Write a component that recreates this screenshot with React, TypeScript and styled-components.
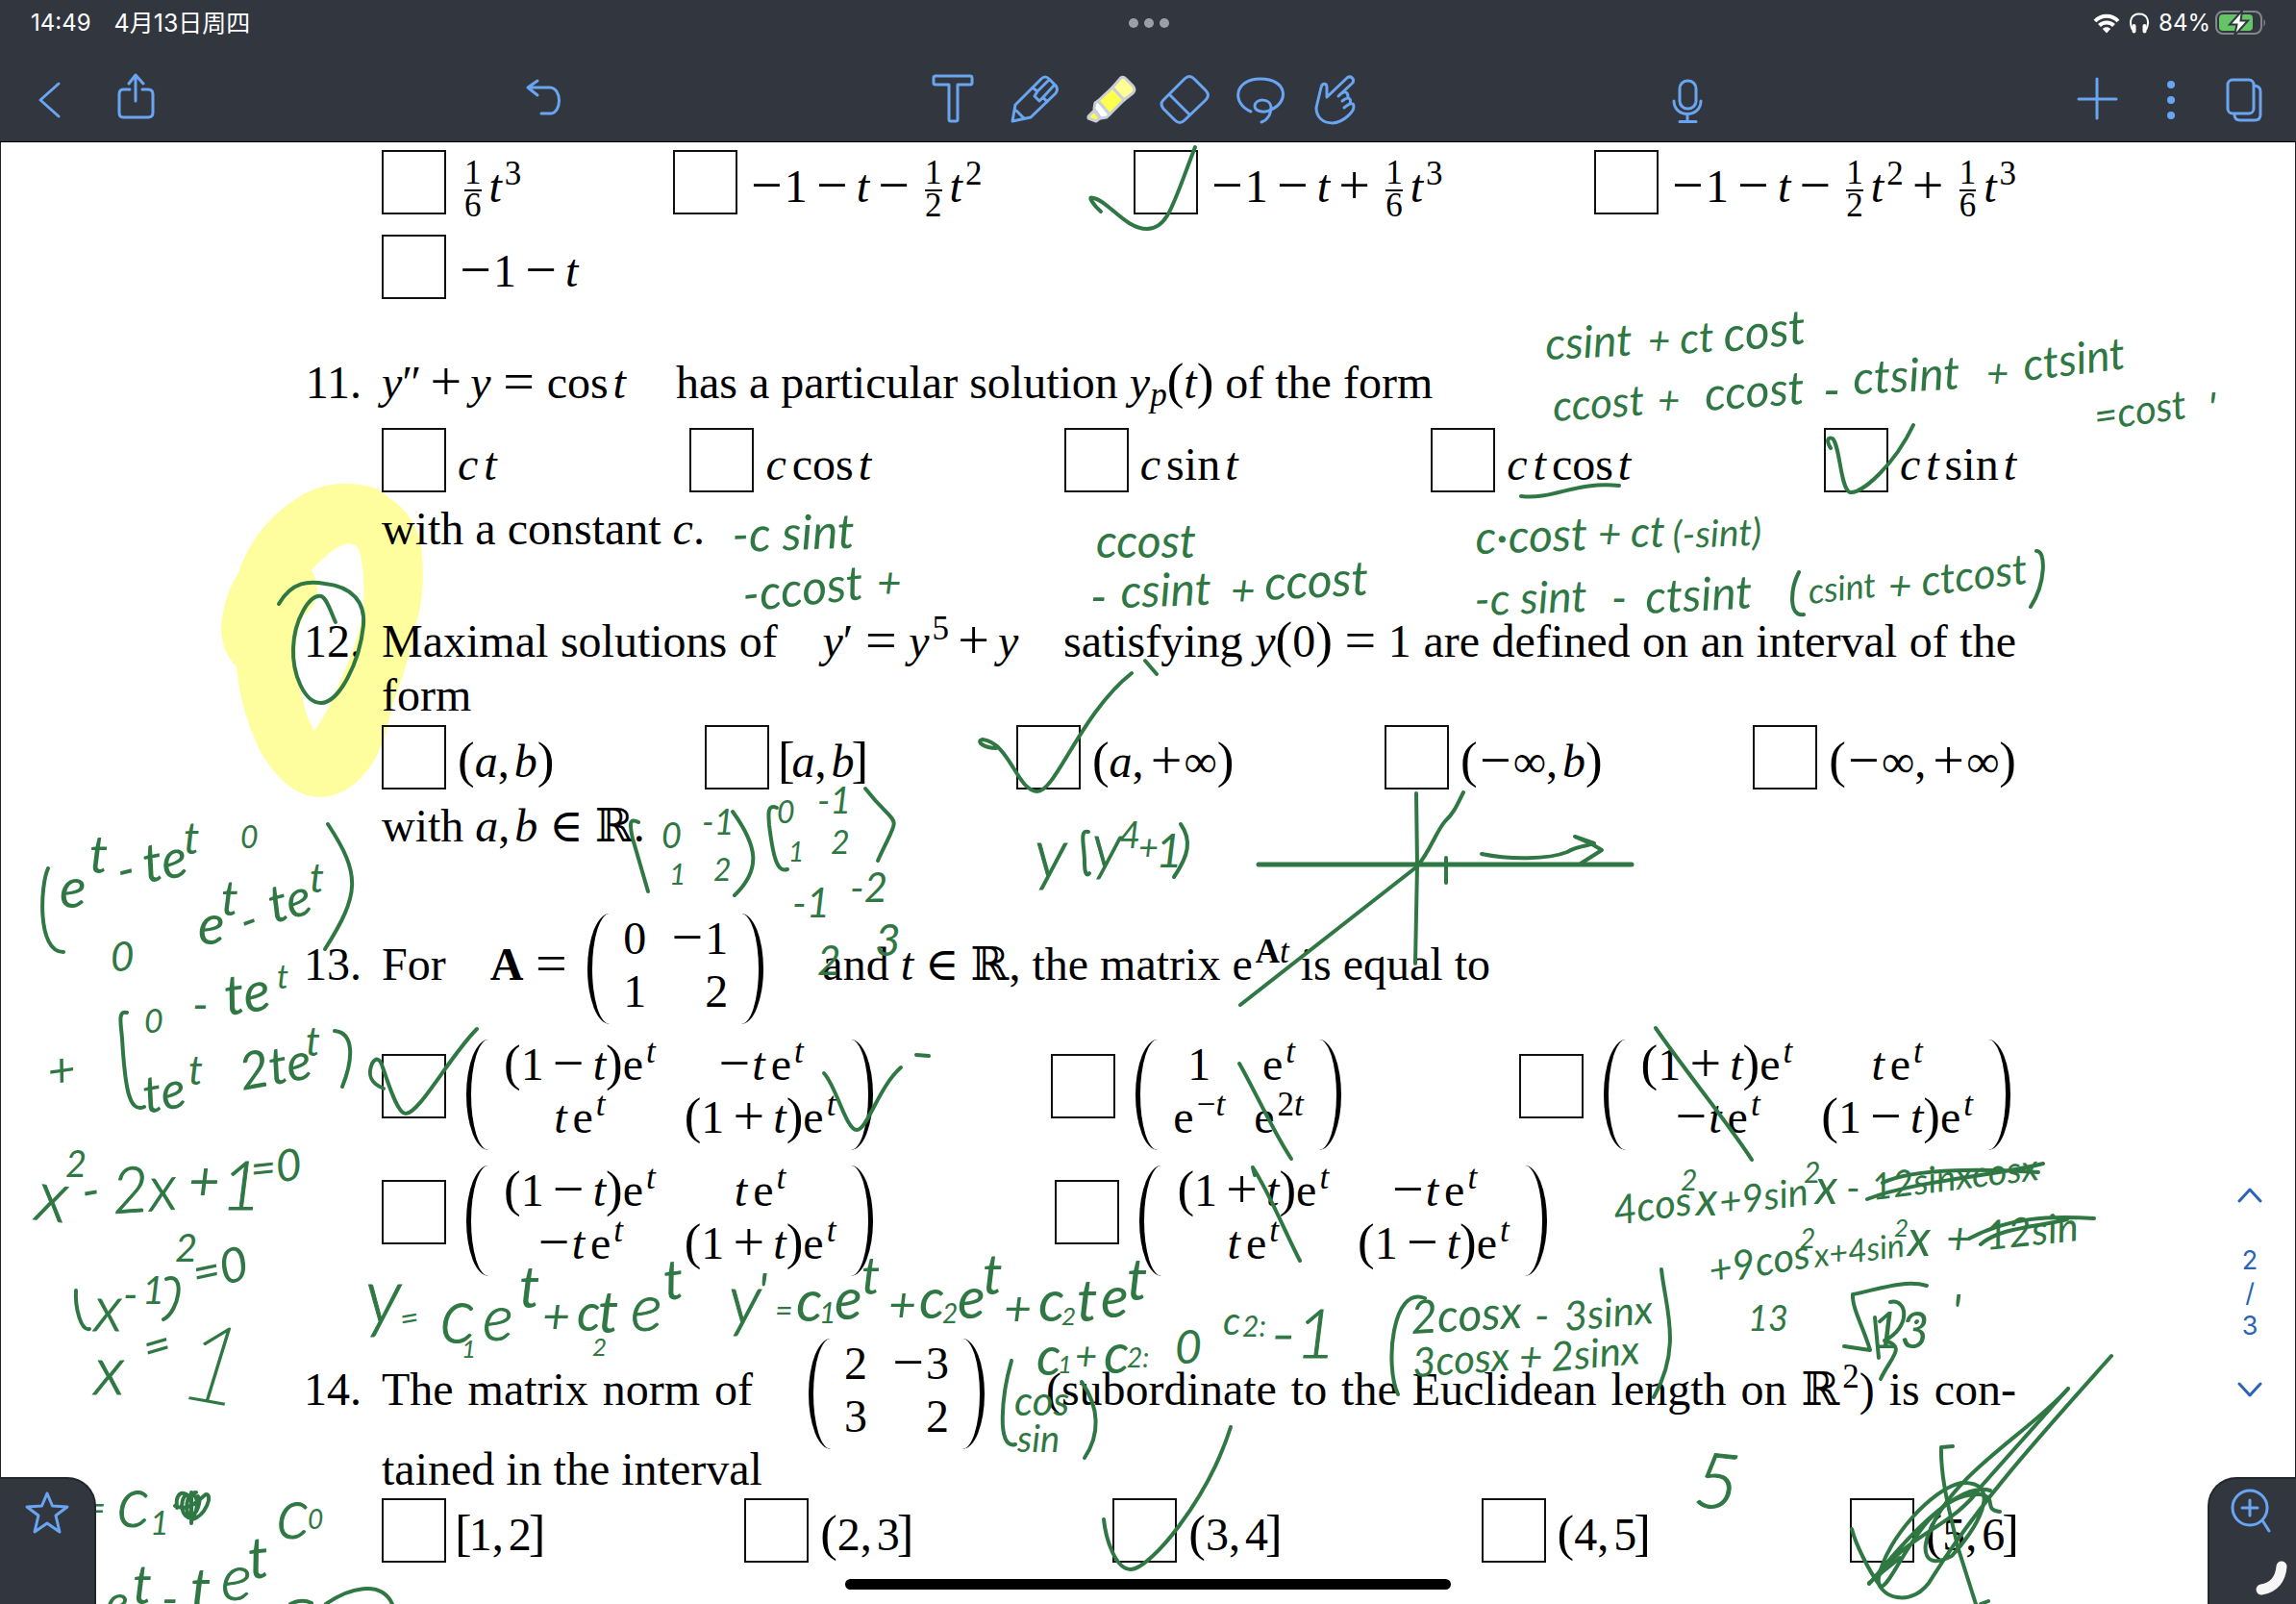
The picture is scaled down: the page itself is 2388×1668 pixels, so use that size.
import React from "react";
import styled, { createGlobalStyle, css } from "styled-components";

const BLUE = "#6aa5f2";
const BAR = "#32363f";
const INK = "#2f7843";

const Global = createGlobalStyle`
  html, body, #root { height: 100%; }
  body { margin: 0; background: #fff; overflow: hidden; }
  * { box-sizing: border-box; }
`;

/* ---------- shell ---------- */

const Shell = styled.div`
  position: relative;
  display: flex;
  flex-direction: column;
  height: 100vh;
  overflow: hidden;
  font-family: Inter, "Noto Sans CJK SC", sans-serif;
`;

const Header = styled.header`
  flex: none;
  background: ${BAR};
  border-bottom: 1px solid #000;
`;

const StatusBar = styled.div`
  display: grid;
  grid-template-columns: 1fr auto 1fr;
  align-items: center;
  height: 48px;
  padding: 0 30px 0 32px;
  color: #fff;
  font-size: 24px;
  line-height: 32px;
`;

const StatusGroup = styled.div<{ $end?: boolean }>`
  display: flex;
  align-items: center;
  gap: ${(p) => (p.$end ? 10 : 24)}px;
  justify-content: ${(p) => (p.$end ? "flex-end" : "flex-start")};
`;

const Day = styled.span`
  font-size: 25px;
`;

const Charge = styled.span`
  display: flex;
  align-items: center;
  gap: 5px;
`;

const Dots = styled.button`
  display: flex;
  gap: 6px;
  padding: 0;
  border: 0;
  background: none;
`;

const Dot = styled.span`
  width: 10px;
  height: 10px;
  border-radius: 50%;
  background: #9d9fa8;
`;

const Toolbar = styled.nav`
  display: grid;
  grid-template-columns: 1fr auto 1fr;
  height: 99px;
  padding: 28px 14px 0 12px;
`;

const ToolGroup = styled.div<{ $split: "start" | "end" }>`
  display: flex;
  justify-content: space-between;
  padding-right: ${(p) => (p.$split === "start" ? 341 : 0)}px;
  padding-left: ${(p) => (p.$split === "end" ? 275 : 0)}px;
`;

const Cluster = styled.div<{ $main?: boolean }>`
  display: flex;
  padding-right: ${(p) => (p.$main ? 14 : 0)}px;
`;

const ToolButton = styled.button<{ $wide?: boolean }>`
  display: flex;
  justify-content: center;
  width: ${(p) => (p.$wide ? 92 : 78)}px;
  height: 56px;
  padding: 0;
  border: 0;
  background: none;
`;

const Glyph = styled.svg`
  display: block;
  flex: none;
  fill: none;
  stroke: ${BLUE};
  stroke-width: 3;
  stroke-linecap: round;
  stroke-linejoin: round;
`;

type ToolProps = { label: string; cx: number; wide?: boolean; children: React.ReactNode };

const Tool = ({ label, cx, wide, children }: ToolProps) => (
  <ToolButton type="button" aria-label={label} $wide={wide}>
    <Glyph width="56" height="56" viewBox={`${cx - 28} 76 56 56`} aria-hidden="true">
      {children}
    </Glyph>
  </ToolButton>
);

/* ---------- document ---------- */

const Canvas = styled.main`
  position: relative;
  flex: 1;
  min-height: 0;
  overflow: hidden;
  border: solid #1f2229;
  border-width: 0 1px;
  background: #fff;
`;

const Sheet = styled.article`
  position: relative;
  padding: 8px 290px 0 315px;
  color: #000;
  font-family: "Liberation Serif", "DejaVu Serif", serif;
  font-size: 48px;
  line-height: 56px;
`;

const Question = styled.section<{ $top?: number }>`
  display: grid;
  grid-template-columns: 60px minmax(0, 1fr);
  column-gap: 21px;
  margin-top: ${(p) => p.$top ?? 0}px;
`;

const Num = styled.span<{ $tall?: boolean }>`
  padding-top: ${(p) => (p.$tall ? 18 : 0)}px;
  text-align: right;
`;

const Body = styled.div`
  grid-column: 2;
`;

const Para = styled.p<{ $top?: number }>`
  margin: ${(p) => p.$top ?? 0}px 0 0;
  text-align: justify;
`;

const Options = styled.div<{ $top?: number; $packed?: boolean }>`
  display: flex;
  justify-content: ${(p) => (p.$packed ? "flex-start" : "space-between")};
  gap: ${(p) => (p.$packed ? 183 : 0)}px;
  margin-top: ${(p) => p.$top ?? 0}px;
`;

const Choice = styled.label<{ $matrix?: boolean }>`
  display: flex;
  align-items: flex-start;
  gap: 12px;
  height: ${(p) => (p.$matrix ? 115 : 67)}px;
  white-space: nowrap;
`;

const Box = styled.input<{ $low?: boolean }>`
  appearance: none;
  flex: none;
  width: 67px;
  height: 67px;
  margin: ${(p) => (p.$low ? 15 : 0)}px 0 0;
  border: 2px solid #111;
  border-radius: 0;
`;

const Formula = styled.span`
  padding-top: 10px;
`;

const M = styled.span`
  white-space: nowrap;
`;

const I = styled.i<{ $gap?: boolean }>`
  margin-right: ${(p) => (p.$gap ? 6 : 0)}px;
`;

const Fn = styled.span`
  margin-right: 5px;
`;

const Sym = styled.span<{ $w: number }>`
  display: inline-block;
  width: ${(p) => p.$w}px;
  font-size: 58px;
  line-height: 0;
  text-align: center;
  vertical-align: -2px;
`;

const Par = styled.span<{ $square?: boolean }>`
  margin: 0 ${(p) => (p.$square ? -3 : 0)}px;
  font-size: 53px;
  line-height: 0;
`;

const Sup = styled.sup`
  margin-left: 3px;
  font-size: 35px;
  line-height: 0;
  vertical-align: 18px;
`;

const Sub = styled.sub`
  font-size: 35px;
  line-height: 0;
  vertical-align: -8px;
`;

const Quad = styled.span<{ $wide?: boolean }>`
  display: inline-block;
  width: ${(p) => (p.$wide ? 40 : 34)}px;
`;

const FracBox = styled.span`
  display: inline-flex;
  flex-direction: column;
  align-items: center;
  margin: -8px 8px -16px 7px;
  font-size: 35px;
  line-height: 30px;
  vertical-align: 19px;
`;

const FracTop = styled.span`
  padding-bottom: 2px;
  border-bottom: 2px solid #000;
`;

const MatrixBox = styled.span<{ $inline?: boolean }>`
  display: inline-flex;
  height: 115px;
  margin: ${(p) => (p.$inline ? "-7px 9px" : "0 6px 0 9px")};
  vertical-align: middle;
`;

const Delim = styled.span<{ $right?: boolean }>`
  width: 23px;
  height: 115px;
  border: 0 solid #000;
  ${(p) =>
    p.$right
      ? css`
          border-right-width: 5px;
          border-radius: 0 100% 100% 0 / 0 50% 50% 0;
        `
      : css`
          border-left-width: 5px;
          border-radius: 100% 0 0 100% / 50% 0 0 50%;
        `}
`;

const Cells = styled.span<{ $right?: boolean }>`
  display: grid;
  grid-template-columns: auto auto;
  gap: 3px ${(p) => (p.$right ? 24 : 30)}px;
  justify-items: ${(p) => (p.$right ? "end" : "center")};
  padding: 0 ${(p) => (p.$right ? 14 : 16)}px 8px;
  line-height: 52px;
`;

const Bin = ({ s }: { s: string }) => <Sym $w={51}>{s}</Sym>;
const Un = ({ s }: { s: string }) => <Sym $w={37}>{s}</Sym>;
const Eq = () => <Sym $w={58}>=</Sym>;

const Frac = ({ d }: { d: number }) => (
  <FracBox>
    <FracTop>1</FracTop>
    <span>{d}</span>
  </FracBox>
);

const Matrix = ({ cells, inline }: { cells: React.ReactNode[]; inline?: boolean }) => (
  <MatrixBox $inline={inline}>
    <Delim />
    <Cells $right={inline}>
      {cells.map((c, i) => (
        <span key={i}>{c}</span>
      ))}
    </Cells>
    <Delim $right />
  </MatrixBox>
);

const Opt = ({ children }: { children: React.ReactNode }) => (
  <Choice>
    <Box type="checkbox" />
    <Formula>{children}</Formula>
  </Choice>
);

const MatrixOpt = ({ cells }: { cells: React.ReactNode[] }) => (
  <Choice $matrix>
    <Box type="checkbox" $low />
    <Matrix cells={cells} />
  </Choice>
);

const Et = () => (
  <>
    e<Sup><i>t</i></Sup>
  </>
);

const Lin = ({ s }: { s: string }) => (
  <M>
    <Par>(</Par>1<Bin s={s} /><i>t</i><Par>)</Par><Et />
  </M>
);

const TEt = ({ neg }: { neg?: boolean }) => (
  <M>
    {neg && <Un s="−" />}
    <I $gap>t</I>
    <Et />
  </M>
);

const OneT = () => (
  <>
    <Un s="−" />1<Bin s="−" /><i>t</i>
  </>
);

const Interval = ({ open, a, b, close }: { open: string; a: React.ReactNode; b: React.ReactNode; close: string }) => (
  <M>
    <Par $square={open === "["}>{open}</Par>{a}<Fn>,</Fn>{b}<Par $square={close === "]"}>{close}</Par>
  </M>
);

/* ---------- pen layer ---------- */

const Layer = styled.svg`
  position: absolute;
  top: -148px;
  left: -1px;
  overflow: visible;
  pointer-events: none;
`;

const Stroke = styled.path<{ $w?: number }>`
  fill: none;
  stroke: ${INK};
  stroke-width: ${(p) => p.$w ?? 4};
  stroke-linecap: round;
  stroke-linejoin: round;
`;

const Written = styled.text<{ $size: number }>`
  fill: ${INK};
  stroke: ${INK};
  stroke-width: ${(p) => (p.$size > 80 ? 2 : p.$size > 60 ? 1 : 0)};
  font-family: Lato, "Open Sans", sans-serif;
  font-style: italic;
  font-weight: ${(p) => (p.$size > 80 ? 100 : p.$size > 60 ? 300 : 400)};
  font-size: ${(p) => p.$size}px;
`;

// text, x, baseline, size, tilt in degrees
type Jot = [string, number, number, number, number?];

const jots: Jot[] = [
  ["csint", 1608, 374, 46, -3], ["+", 1714, 368, 40], ["ct", 1748, 368, 44, -4], ["cost", 1794, 366, 50, -6],
  ["ccost", 1616, 438, 44, -4], ["+", 1724, 430, 40], ["ccost", 1774, 427, 48, -4], ["-", 1896, 424, 52], ["ctsint", 1928, 410, 48, -3],
  ["+", 2066, 402, 40], ["ctsint", 2106, 396, 46, -7], ["=cost", 2180, 448, 42, -8], ["'", 2296, 440, 44],
  ["-c sint", 762, 574, 50, -2], ["-ccost", 774, 636, 50, -6], ["+", 912, 622, 44],
  ["ccost", 1140, 580, 48], ["-", 1134, 638, 50], ["csint", 1166, 632, 48, -2], ["+", 1280, 630, 44], ["ccost", 1316, 624, 50, -3],
  ["c·cost", 1535, 576, 48, -2], ["+", 1662, 570, 42], ["ct", 1696, 569, 44], ["(-sint)", 1740, 570, 39, -2],
  ["-c sint", 1534, 640, 46, -2], ["-", 1676, 638, 46], ["ctsint", 1712, 638, 48, -3], ["csint", 1882, 628, 36, -6], ["+", 1964, 624, 42], ["ctcost", 2000, 620, 44, -7],
  ["y", 1076, 912, 72], ["y", 1136, 903, 66], ["4", 1164, 882, 38], ["+", 1184, 894, 36], ["1", 1202, 902, 48],
  ["0", 688, 882, 36], ["-1", 730, 868, 36], ["1", 696, 920, 30], ["2", 742, 916, 32],
  ["0", 808, 856, 32], ["-1", 850, 846, 38], ["1", 820, 896, 28], ["2", 864, 888, 34],
  ["-1", 824, 954, 42], ["-2", 884, 938, 42], ["3", 910, 994, 46], ["2", 850, 1014, 42],
  ["e", 62, 944, 58], ["t", 93, 908, 54], ["-", 126, 924, 52, -14], ["te", 152, 918, 56, -10], ["t", 191, 888, 46], ["0", 250, 882, 32],
  ["0", 115, 1010, 42], ["e", 206, 982, 58], ["t", 230, 952, 50], ["-", 256, 976, 50, -20], ["te", 284, 960, 54, -14], ["t", 322, 928, 42],
  ["0", 150, 1074, 34], ["-", 200, 1062, 48], ["te", 236, 1056, 58, -8], ["t", 288, 1028, 34],
  ["+", 52, 1132, 50, -8], ["te", 152, 1158, 54, -10], ["t", 196, 1128, 42], ["2te", 252, 1134, 54, -10], ["t", 318, 1098, 42],
  ["x", 36, 1268, 74, 6], ["2", 68, 1224, 38], ["-", 88, 1258, 54, -10], ["2x", 118, 1262, 66, -4], ["+", 196, 1248, 56], ["1", 230, 1258, 72], ["=0", 262, 1232, 46, -6],
  ["x", 98, 1384, 66], ["-", 128, 1362, 44], ["1", 148, 1356, 40], ["2", 182, 1312, 40], ["=0", 204, 1342, 50, -12],
  ["x", 98, 1450, 72], ["=", 154, 1420, 50, -16], ["1", 184, 1452, 112, 10],
  ["y", 380, 1376, 80], ["=", 418, 1384, 34, -10], ["c", 458, 1396, 80], ["1", 480, 1412, 26], ["e", 502, 1394, 68], ["t", 540, 1360, 60],
  ["+", 564, 1386, 50], ["c", 600, 1384, 54], ["t", 622, 1386, 60], ["2", 616, 1410, 26], ["e", 656, 1384, 70], ["t", 692, 1352, 58, -6],
  ["y", 758, 1376, 72], ["'", 788, 1362, 52], ["=", 806, 1374, 32], ["c", 828, 1374, 60], ["1", 852, 1376, 30], ["e", 868, 1372, 60], ["t", 896, 1346, 54],
  ["+", 924, 1374, 50], ["c", 956, 1371, 58], ["2", 980, 1376, 28], ["e", 996, 1371, 60], ["t", 1022, 1346, 58],
  ["+", 1044, 1378, 50], ["c", 1080, 1374, 60], ["2", 1104, 1378, 26], ["t", 1120, 1374, 60], ["e", 1145, 1370, 60], ["t", 1172, 1352, 60],
  ["c", 1078, 1430, 56], ["1", 1100, 1428, 26], ["+", 1118, 1424, 40], ["c", 1148, 1428, 58], ["2:", 1172, 1422, 28], ["0", 1222, 1418, 48],
  ["c", 1272, 1388, 40], ["2:", 1292, 1390, 30], ["-1", 1322, 1412, 72],
  ["cos", 1055, 1472, 42], ["sin", 1058, 1510, 38],
  ["2cosx", 1468, 1387, 48, -3], ["-", 1596, 1384, 44], ["3sinx", 1628, 1384, 42, -5],
  ["3cosx", 1470, 1432, 42, -4], ["+", 1580, 1426, 42], ["2sinx", 1614, 1426, 42, -5],
  ["4cos", 1680, 1274, 42, -8], ["2", 1748, 1238, 30], ["x", 1764, 1264, 48], ["+9sin", 1790, 1264, 40, -7], ["2", 1876, 1230, 30], ["x", 1888, 1252, 50], ["-", 1920, 1250, 42],
  ["12sinxcosx", 1948, 1248, 38, -7],
  ["+9cos", 1780, 1336, 42, -10], ["2", 1872, 1298, 28], ["x+4sin", 1888, 1318, 34, -7], ["2", 1970, 1286, 26], ["x", 1984, 1306, 52], ["+", 2024, 1304, 46], ["12sin", 2066, 1300, 42, -6],
  ["13", 1818, 1384, 36], ["13", 1946, 1402, 52], ["'", 2030, 1382, 50],
  ["5", 1760, 1566, 80, 6],
  ["=", 88, 1582, 38], ["c", 122, 1588, 74], ["1", 156, 1596, 34], ["c", 288, 1600, 74], ["0", 320, 1590, 28],
  ["e", 110, 1684, 50], ["t", 138, 1668, 56], ["-", 168, 1680, 50], ["t", 198, 1674, 60], ["e", 230, 1664, 68], ["t", 260, 1642, 60, -6],
];

const strokes: string[] = [
  // ticks over the chosen boxes
  "M1145 220C1138 214 1130 203 1137 206C1152 208 1170 238 1193 238C1215 238 1220 212 1243 153",
  "M1904 466C1899 458 1901 454 1906 456C1914 464 1914 508 1924 512C1936 514 1970 484 1990 442",
  "M1582 516C1615 520 1640 500 1684 505",
  "M1036 778C1024 778 1014 771 1022 769C1050 772 1058 823 1079 823C1098 823 1124 742 1177 700M1191 687L1203 701",
  "M399 1132C385 1126 382 1118 387 1106C391 1098 396 1102 398 1110C404 1126 413 1158 422 1158C436 1158 468 1098 496 1070",
  "M857 1116C870 1130 880 1175 891 1175C902 1175 914 1130 937 1110M953 1097L966 1098",
  "M1148 1580C1150 1600 1160 1632 1176 1632C1196 1632 1256 1560 1280 1484",
  // loop round the question number
  "M290 628C304 604 322 604 338 607C366 610 380 626 378 650C374 690 352 731 334 731C316 731 304 700 305 674C306 644 322 618 334 620C340 622 344 636 349 647",
  // struck answers
  "M1289 1106C1304 1132 1326 1180 1343 1205",
  "M1305 1222L1303 1214C1320 1240 1336 1280 1352 1311",
  "M1722 1069C1750 1110 1796 1166 1822 1206",
  // axes, slope and arrow
  "M1473 825L1474 900L1472 1002M1290 1045L1474 901C1488 884 1494 864 1503 854C1512 846 1516 836 1522 824M1504 892L1504 918",
  "M1541 888C1570 894 1610 894 1630 886C1640 880 1650 880 1658 877L1638 870L1656 878L1666 884L1644 898",
  // brackets of the margin working
  "M50 903C42 920 38 990 66 990M341 857C376 910 374 930 338 987",
  "M132 1053C122 1050 126 1066 127 1080C130 1130 134 1158 150 1151M348 1072C368 1074 368 1100 356 1130",
  "M79 1342C78 1360 84 1384 93 1382M173 1330C194 1322 186 1364 170 1372",
  "M664 855C654 850 655 858 658 872L674 927M762 844C788 880 792 904 764 931",
  "M808 840C798 836 799 846 800 858C804 890 808 908 819 904M900 820C936 866 938 840 913 895",
  "M1132 865C1122 862 1128 880 1128 896C1128 908 1130 912 1133 908M1228 857C1240 874 1236 890 1221 912",
  "M1871 595C1862 612 1860 642 1876 639M2118 573C2128 572 2128 606 2112 631",
  "M1052 1415C1042 1450 1036 1508 1056 1502M1125 1437C1144 1464 1144 1492 1128 1516",
  "M1482 1350C1448 1336 1440 1420 1454 1450M1728 1320C1732 1360 1750 1400 1720 1453",
  // root sign and its scribble
  "M1918 1400L1945 1404C1938 1380 1926 1360 1927 1346C1950 1342 1980 1330 2004 1337M1954 1412L1950 1370M1966 1354C1984 1350 1988 1380 1960 1394C1984 1400 1966 1412 1956 1434M1994 1374L1993 1375",
  // crossed-out terms
  "M1942 1247C1990 1228 2080 1222 2125 1210M1958 1230C1990 1214 2070 1216 2120 1219",
  "M2048 1288C2090 1266 2130 1264 2178 1267M2060 1294C2080 1276 2120 1276 2150 1268",
  // last answer scribbled over
  "M2196 1410C2130 1484 2060 1560 2010 1640C1990 1676 1950 1660 1954 1640C1962 1600 2010 1548 2040 1542C2080 1540 2064 1580 2030 1618C2000 1634 1998 1610 2008 1590C2034 1530 2110 1490 2151 1444",
  "M2151 1444L2062 1544C2030 1590 1990 1590 1944 1647M2070 1550C2040 1540 1990 1590 1946 1645M1926 1590C1930 1606 1944 1634 1956 1650C1970 1650 2000 1550 2060 1554C2078 1558 2062 1570 2080 1572M1976 1620L1944 1646",
  "M2031 1504L2019 1505C2018 1540 2030 1580 2036 1608L2055 1668M2060 1668L2068 1665",
  // doodles at the lower left
  "M184 1568C182 1552 190 1550 196 1556C206 1548 208 1570 200 1578C188 1580 186 1560 194 1554M182 1566C196 1572 204 1562 214 1554C222 1554 214 1576 200 1580C190 1572 194 1552 204 1552M199 1552L199 1584M206 1556C210 1562 204 1574 200 1576",
  "M302 1668C310 1664 318 1664 324 1667M339 1668C362 1652 396 1642 408 1668",
];

const Highlight = () => (
  <Layer width="2388" height="1668" viewBox="0 0 2388 1668" aria-hidden="true">
    <path
      fill="#fffe9f"
      fillRule="evenodd"
      d="M362 503C384 504 396 508 405 518C424 530 434 548 438 566C442 604 440 626 430 659C424 690 416 712 409 731C402 760 400 768 394 781C380 812 356 829 332 829C306 828 286 808 270 780C256 750 248 720 246 693C236 684 230 670 230 652C232 630 238 610 248 596C258 566 274 544 300 524C322 508 340 502 362 503ZM363 565C352 566 340 576 324 593C334 610 332 628 316 640C306 660 304 690 315 727C318 744 322 752 327 760C334 750 340 740 348 722C358 698 376 660 378 630C380 600 376 572 370 567Z"
    />
  </Layer>
);

const Ink = () => (
  <Layer width="2388" height="1668" viewBox="0 0 2388 1668">
    {strokes.map((d) => (
      <Stroke key={d} d={d} />
    ))}
    <Stroke d="M1309 899L1697 899" $w={5} />
    {jots.map(([t, x, y, size, tilt], i) => (
      <Written key={i} x={x} y={y} $size={size} transform={tilt ? `rotate(${tilt} ${x} ${y})` : undefined}>
        {t}
      </Written>
    ))}
  </Layer>
);

/* ---------- floating controls ---------- */

const Corner = styled.div<{ $side: "left" | "right" }>`
  position: absolute;
  bottom: 0;
  ${(p) => p.$side}: 0;
  width: ${(p) => (p.$side === "left" ? 100 : 92)}px;
  height: 132px;
  padding-top: 7px;
  border: 2px solid #22262d;
  border-width: 2px ${(p) => (p.$side === "left" ? "2px 0 0" : "0 0 2px")};
  border-radius: ${(p) => (p.$side === "left" ? "0 30px 0 0" : "30px 0 0 0")};
  background: ${BAR};
`;

const CornerButton = styled.button`
  display: flex;
  justify-content: center;
  width: 100%;
  padding: 0;
  border: 0;
  background: none;
`;

const Swoosh = styled.svg`
  position: absolute;
  right: 0;
  bottom: 0;
`;

const Pager = styled.nav`
  position: absolute;
  right: 28px;
  bottom: 209px;
  display: flex;
  flex-direction: column;
  align-items: center;
  width: 40px;
  color: #2b63b8;
  font-size: 27px;
  line-height: 34px;
`;

const PagerButton = styled.button`
  display: flex;
  align-items: center;
  justify-content: center;
  width: 40px;
  height: 28px;
  padding: 0;
  border: 0;
  background: none;

  & > svg {
    stroke: #2b63b8;
  }
`;

const Count = styled.div`
  display: flex;
  flex-direction: column;
  align-items: center;
  margin: 37px 0 35px;
`;

const HomeBar = styled.div`
  position: absolute;
  bottom: 15px;
  left: 50%;
  width: 630px;
  height: 11px;
  border-radius: 6px;
  background: #000;
  transform: translateX(-50%);
`;

export default function App() {
  return (
    <Shell>
      <Global />
      <Header>
        <StatusBar>
          <StatusGroup>
            <span>14:49</span>
            <Day>4月13日周四</Day>
          </StatusGroup>
          <Dots type="button" aria-label="Multitasking">
            <Dot />
            <Dot />
            <Dot />
          </Dots>
          <StatusGroup $end>
            <svg width="28" height="21" viewBox="0 0 28 21" fill="none" stroke="#fff" strokeWidth="4" aria-hidden="true">
              <path d="M2 8C8.500 1 19.500 1 26 8" />
              <path d="M6.500 12.500C10.500 8.500 17.500 8.500 21.500 12.500" />
              <path d="M14 20.500L9.800 16C12 13.800 16 13.800 18.200 16Z" fill="#fff" stroke="none" />
            </svg>
            <svg width="20" height="22" viewBox="0 0 20 22" fill="none" stroke="#fff" strokeWidth="2" aria-hidden="true">
              <path d="M3 18C-1 10 1 1.500 10 1.500S21 10 17 18" />
              <path d="M4.500 14V19.500M15.500 14V19.500" strokeWidth="4" strokeLinecap="round" />
            </svg>
            <Charge>
              <span>84%</span>
              <svg width="54" height="26" viewBox="0 0 54 26" aria-hidden="true">
                <rect x="1" y="1" width="47" height="23" rx="7" fill="none" stroke="#84868c" strokeWidth="2" />
                <path d="M50.500 8.500Q53.500 12.500 50.500 17Z" fill="#84868c" />
                <rect x="4" y="4" width="35" height="17" rx="4" fill="#65c466" />
                <path d="M28 0L15 14.500H22.500L20 26L34 10.500H26.500Z" fill="#fff" stroke={BAR} strokeWidth="2" />
              </svg>
            </Charge>
          </StatusGroup>
        </StatusBar>
        <Toolbar aria-label="Tools">
          <ToolGroup $split="start">
            <Cluster>
              <Tool label="Back" cx={52}><path d="M62 87L43 104L62 121" /></Tool>
              <Tool label="Share" cx={136} wide>
                <path d="M135 93H128Q124 93 124 98V117Q124 122 128 122H154Q159 122 159 117V98Q159 93 154 93H148M141 105V79M134 87L141 78L149 87" />
              </Tool>
            </Cluster>
            <Tool label="Undo" cx={565}><path d="M559 84L549 91L559 99M549 91H572C585 92 584 117 573 118H563" /></Tool>
          </ToolGroup>
          <Cluster $main>
            <Tool label="Text" cx={991} wide>
              <path d="M973 79H1009Q1011 79 1011 81V86Q1011 88 1009 88H996V124Q996 126 994 126H989Q987 126 987 124V88H973Q971 88 971 86V81Q971 79 973 79Z" />
            </Tool>
            <Tool label="Pen" cx={1076}>
              <path d="M1053 126L1056 109L1083 82Q1087 78 1091 82L1098 89Q1101 93 1098 97L1072 122ZM1057 115L1065 123M1075 92L1079 95L1076 100L1081 105L1085 101L1089 106M1079 95L1091 83M1085 101L1096 89" />
            </Tool>
            <Tool label="Highlighter" cx={1154}>
              <g stroke="#c9ced8">
                <path d="M1157 91L1164 83Q1167 78 1171 82L1178 89Q1182 93 1178 97L1169 104Z" fill="#ffff93" />
                <path d="M1142 105L1157 91L1169 104L1154 119Z" fill="#ffff4d" />
                <path d="M1138 113L1139 107L1142 105L1154 119L1151 122L1145 123Z" fill="#fff" />
                <path d="M1138 115L1132 121V123L1140 126L1144 123Z" fill="#ffff4d" />
              </g>
            </Tool>
            <Tool label="Eraser" cx={1232}>
              <path d="M1232 82Q1237 77 1242 82L1254 94Q1259 99 1254 104L1232 125Q1227 130 1222 125L1210 113Q1206 108 1210 104ZM1217 99L1237 119" />
            </Tool>
            <Tool label="Lasso" cx={1311}>
              <path d="M1302 116C1282 108 1284 82 1312 82S1342 106 1323 114C1316 118 1306 116 1306 110C1307 102 1322 102 1323 111C1323 119 1319 125 1313 127" />
            </Tool>
            <Tool label="Pointer" cx={1388}>
              <path d="M1380 101L1401 81C1405 78 1409 82 1407 86L1392 100M1380 101V91C1380 86 1375 86 1374 91L1369 112C1369 122 1376 128 1386 128C1398 127 1408 116 1408 111C1408 106 1404 107 1398 112M1404 108C1406 102 1402 100 1396 105M1402 101C1402 95 1398 94 1393 99" />
            </Tool>
          </Cluster>
          <ToolGroup $split="end">
            <Tool label="Record" cx={1755}>
              <rect x="1747" y="84" width="17" height="29" rx="8" />
              <path d="M1741 105C1741 123 1769 123 1769 105M1755 119V126M1747 126.500H1764" />
            </Tool>
            <Cluster>
              <Tool label="Add" cx={2179}><path d="M2162 103H2201M2181 82V123" /></Tool>
              <Tool label="More" cx={2257}>
                <g fill={BLUE} stroke="none">
                  <circle cx="2258" cy="88" r="4" />
                  <circle cx="2258" cy="104" r="4" />
                  <circle cx="2258" cy="120" r="4" />
                </g>
              </Tool>
              <Tool label="Pages" cx={2335}>
                <rect x="2317" y="83" width="27" height="35" rx="5" />
                <path d="M2345 89Q2351 90 2351 95V119Q2351 125 2345 125H2330Q2324 125 2324 119" />
              </Tool>
            </Cluster>
          </ToolGroup>
        </Toolbar>
      </Header>

      <Canvas>
        <Highlight />
        <Sheet>
          <Question>
            <Body>
              <Options>
                <Opt><Frac d={6} /><i>t</i><Sup>3</Sup></Opt>
                <Opt><OneT /><Bin s="−" /><Frac d={2} /><i>t</i><Sup>2</Sup></Opt>
                <Opt><OneT /><Bin s="+" /><Frac d={6} /><i>t</i><Sup>3</Sup></Opt>
                <Opt><OneT /><Bin s="−" /><Frac d={2} /><i>t</i><Sup>2</Sup><Bin s="+" /><Frac d={6} /><i>t</i><Sup>3</Sup></Opt>
              </Options>
              <Options $top={21}>
                <Opt><OneT /></Opt>
              </Options>
            </Body>
          </Question>

          <Question $top={59}>
            <Num>11.</Num>
            <Body>
              <Para>
                <M><i>y</i>″<Bin s="+" /><i>y</i><Eq /><Fn>cos</Fn><i>t</i></M><Quad $wide /> has a particular solution{" "}
                <M><i>y</i><Sub><i>p</i></Sub><Par>(</Par><i>t</i><Par>)</Par></M> of the form
              </Para>
              <Options $top={19}>
                <Opt><I $gap>c</I><i>t</i></Opt>
                <Opt><I $gap>c</I><Fn>cos</Fn><i>t</i></Opt>
                <Opt><I $gap>c</I><Fn>sin</Fn><i>t</i></Opt>
                <Opt><I $gap>c</I><I $gap>t</I><Fn>cos</Fn><i>t</i></Opt>
                <Opt><I $gap>c</I><I $gap>t</I><Fn>sin</Fn><i>t</i></Opt>
              </Options>
              <Para $top={10}>with a constant <i>c</i>.</Para>
            </Body>
          </Question>

          <Question $top={61}>
            <Num>12.</Num>
            <Body>
              <Para>
                Maximal solutions of<Quad /> <M><i>y</i>′<Eq /><i>y</i><Sup>5</Sup><Bin s="+" /><i>y</i></M><Quad /> satisfying{" "}
                <M><i>y</i><Par>(</Par>0<Par>)</Par><Eq />1</M> are defined on an interval of the form
              </Para>
              <Options $top={3}>
                <Opt><Interval open="(" a={<i>a</i>} b={<i>b</i>} close=")" /></Opt>
                <Opt><Interval open="[" a={<i>a</i>} b={<i>b</i>} close="]" /></Opt>
                <Opt><Interval open="(" a={<i>a</i>} b={<><Un s="+" />∞</>} close=")" /></Opt>
                <Opt><Interval open="(" a={<><Un s="−" />∞</>} b={<i>b</i>} close=")" /></Opt>
                <Opt><Interval open="(" a={<><Un s="−" />∞</>} b={<><Un s="+" />∞</>} close=")" /></Opt>
              </Options>
              <Para $top={10}>with <M><i>a</i><Fn>,</Fn><i>b</i> ∈ ℝ</M>.</Para>
            </Body>
          </Question>

          <Question $top={70}>
            <Num $tall>13.</Num>
            <Body>
              <Para>
                For<Quad /> <b>A</b><Eq />
                <Matrix inline cells={["0", <M key="a"><Un s="−" />1</M>, "1", "2"]} />
                <Quad $wide /> and <M><i>t</i> ∈ ℝ</M>, the matrix <M>e<Sup><b>A</b><i>t</i></Sup></M> is equal to
              </Para>
              <Options $top={23}>
                <MatrixOpt cells={[<Lin key="a" s="−" />, <TEt key="b" neg />, <TEt key="c" />, <Lin key="d" s="+" />]} />
                <MatrixOpt cells={["1", <M key="b"><Et /></M>, <M key="c">e<Sup>−<i>t</i></Sup></M>, <M key="d">e<Sup>2<i>t</i></Sup></M>]} />
                <MatrixOpt cells={[<Lin key="a" s="+" />, <TEt key="b" />, <TEt key="c" neg />, <Lin key="d" s="−" />]} />
              </Options>
              <Options $top={16} $packed>
                <MatrixOpt cells={[<Lin key="a" s="−" />, <TEt key="b" />, <TEt key="c" neg />, <Lin key="d" s="+" />]} />
                <MatrixOpt cells={[<Lin key="a" s="+" />, <TEt key="b" neg />, <TEt key="c" />, <Lin key="d" s="−" />]} />
              </Options>
            </Body>
          </Question>

          <Question $top={72}>
            <Num $tall>14.</Num>
            <Body>
              <Para>
                The matrix norm of<Quad />{" "}
                <Matrix inline cells={["2", <M key="a"><Un s="−" />3</M>, "3", "2"]} />
                <Quad $wide /> (subordinate to the Euclidean length on <M>ℝ<Sup>2</Sup>)</M> is con&shy;tained in the interval
              </Para>
              <Options $top={2}>
                <Opt><Interval open="[" a="1" b="2" close="]" /></Opt>
                <Opt><Interval open="(" a="2" b="3" close="]" /></Opt>
                <Opt><Interval open="(" a="3" b="4" close="]" /></Opt>
                <Opt><Interval open="(" a="4" b="5" close="]" /></Opt>
                <Opt><Interval open="(" a="5" b="6" close="]" /></Opt>
              </Options>
            </Body>
          </Question>
        </Sheet>
        <Ink />
      </Canvas>

      <Pager aria-label="Pages">
        <PagerButton type="button" aria-label="Previous page">
          <Glyph width="28" height="16" viewBox="0 0 28 16"><path d="M3 14L14 2L25 14" /></Glyph>
        </PagerButton>
        <Count>
          <span>2</span>
          <span>/</span>
          <span>3</span>
        </Count>
        <PagerButton type="button" aria-label="Next page">
          <Glyph width="28" height="16" viewBox="0 0 28 16"><path d="M3 2L14 14L25 2" /></Glyph>
        </PagerButton>
      </Pager>

      <Corner $side="left">
        <CornerButton type="button" aria-label="Favourite">
          <Glyph width="52" height="52" viewBox="0 0 52 52">
            <path d="M26 8L31.500 21L47 22L35 31L39 48L26 39L13 48L17 31L5 22L20.500 21Z" />
          </Glyph>
        </CornerButton>
      </Corner>
      <Corner $side="right">
        <CornerButton type="button" aria-label="Zoom in">
          <Glyph width="52" height="52" viewBox="0 0 52 52">
            <circle cx="23" cy="23" r="18" />
            <path d="M15 23H31M23 15V31M36 36L43 47" />
          </Glyph>
        </CornerButton>
        <Swoosh width="48" height="52" viewBox="0 0 48 52" aria-hidden="true">
          <path d="M33 13C32 26 25 35 12 37" fill="none" stroke="#f6f6f7" strokeWidth="11" strokeLinecap="round" />
        </Swoosh>
      </Corner>
      <HomeBar />
    </Shell>
  );
}
